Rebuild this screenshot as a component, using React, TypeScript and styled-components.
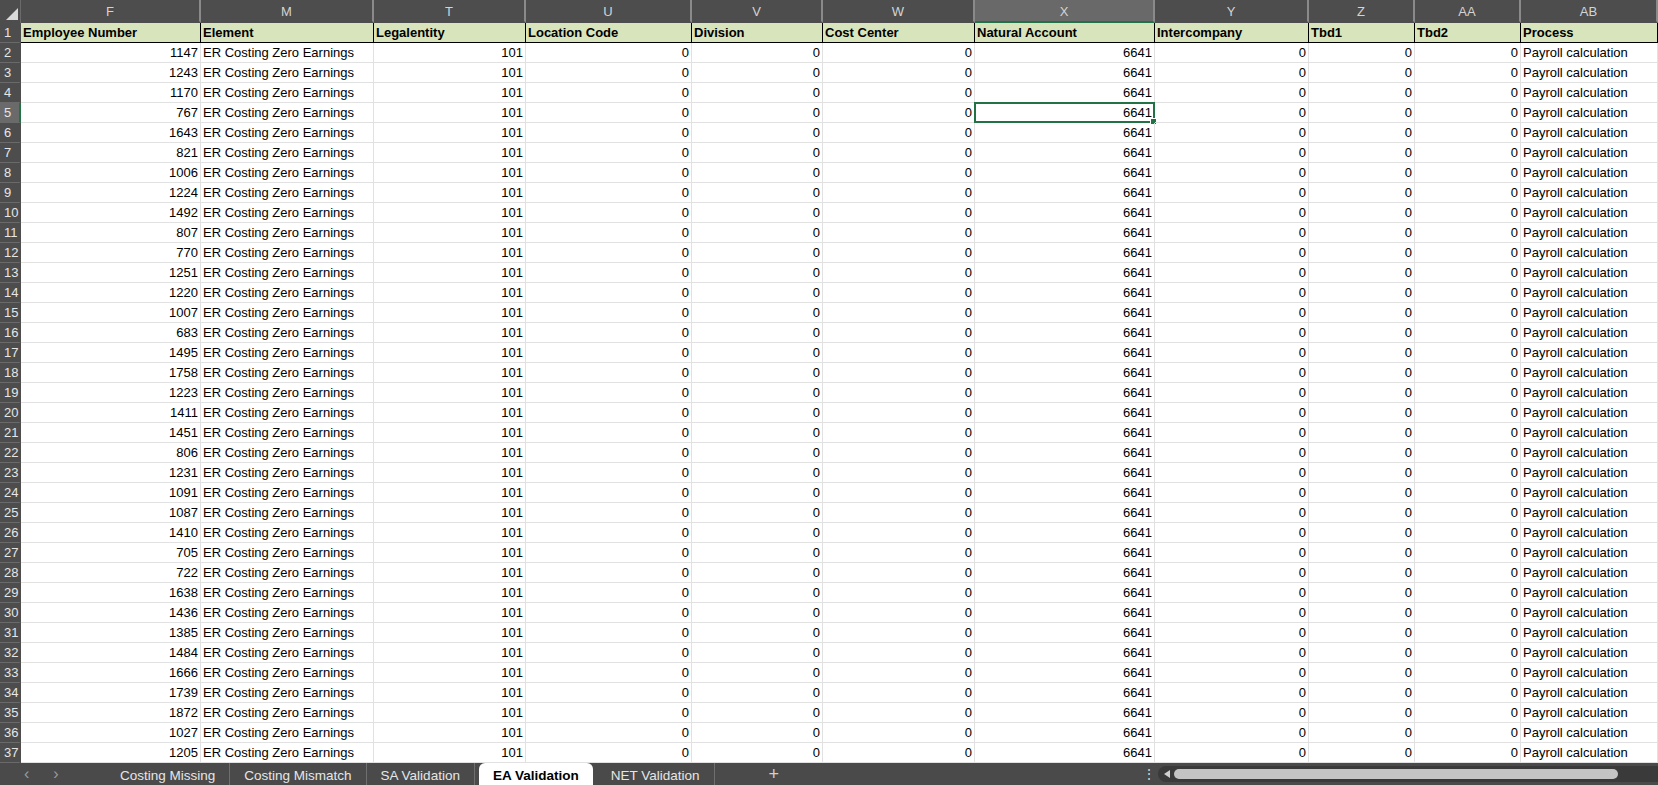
import styled, { createGlobalStyle } from "styled-components";

const GlobalStyle = createGlobalStyle`
  html, body { margin: 0; padding: 0; background: #ffffff; overflow: hidden; }
  body { font-family: "Liberation Sans", Arial, sans-serif; }
`;

const columns = [
  { letter: "F", title: "Employee Number", width: 180 },
  { letter: "M", title: "Element", width: 173 },
  { letter: "T", title: "Legalentity", width: 152 },
  { letter: "U", title: "Location Code", width: 166 },
  { letter: "V", title: "Division", width: 131 },
  { letter: "W", title: "Cost Center", width: 152 },
  { letter: "X", title: "Natural Account", width: 180 },
  { letter: "Y", title: "Intercompany", width: 154 },
  { letter: "Z", title: "Tbd1", width: 106 },
  { letter: "AA", title: "Tbd2", width: 106 },
  { letter: "AB", title: "Process", width: 137 },
];

const employees = [
  1147, 1243, 1170, 767, 1643, 821, 1006, 1224, 1492, 807, 770, 1251, 1220, 1007, 683, 1495, 1758, 1223,
  1411, 1451, 806, 1231, 1091, 1087, 1410, 705, 722, 1638, 1436, 1385, 1484, 1666, 1739, 1872, 1027, 1205,
];

const template = `21px ${columns.map((c) => c.width + "px").join(" ")}`;

const App = () => {
  return (
    <>
      <GlobalStyle />
      <Sheet>
        <Grid style={{ gridTemplateColumns: template }}>
          <Corner>
            <svg width="12" height="12" viewBox="0 0 12 12">
              <polygon points="12,0 12,12 0,12" fill="#d9d9d9" />
            </svg>
          </Corner>
          {columns.map((c) => (
            <ColHead key={c.letter} $active={c.letter === "X"}>
              {c.letter}
            </ColHead>
          ))}
          <RowNum>1</RowNum>
          {columns.map((c) => (
            <TitleCell key={c.title}>{c.title}</TitleCell>
          ))}
          {employees.map((emp, i) => {
            const row = i + 2;
            const values: (string | number)[] = [emp, "ER Costing Zero Earnings", 101, 0, 0, 0, 6641, 0, 0, 0, "Payroll calculation"];
            return [
              <RowNum key={"n" + row} $active={row === 5}>
                {row}
              </RowNum>,
              ...values.map((v, j) => (
                <Cell key={row + "-" + j} $num={typeof v === "number"}>
                  {v}
                  {row === 5 && j === 6 && <Selection />}
                </Cell>
              )),
            ];
          })}
        </Grid>
        <TabBar>
          <NavArrows>
            <span>‹</span>
            <span>›</span>
          </NavArrows>
          <Tabs>
            <Tab>Costing Missing</Tab>
            <Tab>Costing Mismatch</Tab>
            <Tab>SA Validation</Tab>
            <Tab $active>EA Validation</Tab>
            <Tab>NET Validation</Tab>
            <AddTab>+</AddTab>
          </Tabs>
          <Dots>⋮</Dots>
          <Scroll>
            <ScrollArrow>
              <svg width="6" height="8" viewBox="0 0 6 8">
                <polygon points="6,0 6,8 0,4" fill="#d0d0d0" />
              </svg>
            </ScrollArrow>
            <Thumb />
          </Scroll>
        </TabBar>
      </Sheet>
    </>
  );
};
export default App;

const Sheet = styled.div`
  width: 1658px;
  height: 785px;
  display: flex;
  flex-direction: column;
  overflow: hidden;
  font-size: 13px;
  color: #000;
`;

const Grid = styled.div`
  display: grid;
  grid-template-rows: 23px repeat(37, 20px);
  flex: 1;
  overflow: hidden;
`;

const Corner = styled.div`
  background: #4d4d4d;
  display: flex;
  align-items: flex-end;
  justify-content: flex-end;
  padding: 0 2px 3px 0;
  border-right: 1px solid #6a6a6a;
`;

const ColHead = styled.div<{ $active?: boolean }>`
  background: ${(p) => (p.$active ? "#696969" : "#4d4d4d")};
  color: #d4d4d4;
  display: flex;
  align-items: center;
  justify-content: center;
  border-right: 2px solid #8a8a8a;
  border-bottom: 2px solid ${(p) => (p.$active ? "#217346" : "#4d4d4d")};
  box-sizing: border-box;
  padding-top: 2px;
`;

const RowNum = styled.div<{ $active?: boolean }>`
  background: ${(p) => (p.$active ? "#6a6a6a" : "#4d4d4d")};
  color: #e6e6e6;
  display: flex;
  align-items: center;
  justify-content: flex-start;
  padding-left: 4px;
  box-sizing: border-box;
  border-bottom: 1px solid #6a6a6a;
  border-right: 2px solid ${(p) => (p.$active ? "#217346" : "#4d4d4d")};
  font-size: 13px;
`;

const TitleCell = styled.div`
  background: #d8e4bc;
  font-weight: bold;
  display: flex;
  align-items: center;
  padding-left: 2px;
  border-right: 1px solid #000;
  border-bottom: 1px solid #000;
  box-sizing: border-box;
  white-space: nowrap;
  overflow: hidden;
`;

const Cell = styled.div<{ $num?: boolean }>`
  position: relative;
  display: flex;
  align-items: center;
  justify-content: ${(p) => (p.$num ? "flex-end" : "flex-start")};
  padding: 0 2px;
  border-right: 1px solid #e1e1e1;
  border-bottom: 1px solid #e1e1e1;
  box-sizing: border-box;
  white-space: nowrap;
  overflow: visible;
`;

const Selection = styled.div`
  position: absolute;
  inset: -1px -1px -1px -1px;
  border: 2px solid #217346;
  pointer-events: none;
  &::after {
    content: "";
    position: absolute;
    right: -4px;
    bottom: -4px;
    width: 5px;
    height: 5px;
    background: #217346;
    border: 1px solid #fff;
  }
`;

const TabBar = styled.div`
  height: 22px;
  background: #4a4a4a;
  display: flex;
  align-items: stretch;
  color: #e0e0e0;
  font-size: 13.5px;
`;

const NavArrows = styled.div`
  width: 106px;
  display: flex;
  gap: 24px;
  padding-left: 24px;
  align-items: center;
  color: #9a9a9a;
  font-size: 16px;
  box-sizing: border-box;
`;

const Tabs = styled.div`
  display: flex;
  align-items: stretch;
  width: 1034px;
`;

const Tab = styled.div<{ $active?: boolean }>`
  padding: 0 14px;
  display: flex;
  align-items: center;
  white-space: nowrap;
  border-right: ${(p) => (p.$active ? "none" : "1px solid #6f6f6f")};
  background: ${(p) => (p.$active ? "#ffffff" : "transparent")};
  color: ${(p) => (p.$active ? "#000" : "#e6e6e6")};
  font-weight: ${(p) => (p.$active ? "bold" : "normal")};
  border-radius: ${(p) => (p.$active ? "6px 6px 0 0" : "0")};
  margin: ${(p) => (p.$active ? "0 4px 0 4px" : "0")};
  padding-top: 2px;
`;

const AddTab = styled.div`
  display: flex;
  align-items: center;
  padding-left: 54px;
  font-size: 18px;
  color: #d0d0d0;
`;

const Dots = styled.div`
  width: 18px;
  display: flex;
  align-items: center;
  justify-content: center;
  color: #d0d0d0;
  font-size: 14px;
`;

const Scroll = styled.div`
  flex: 1;
  margin: 3px 0 3px 0;
  background: #3a3a3a;
  border-radius: 8px 0 0 8px;
  display: flex;
  align-items: center;
  padding-left: 6px;
  gap: 4px;
`;

const ScrollArrow = styled.div`
  display: flex;
  align-items: center;
`;

const Thumb = styled.div`
  width: 444px;
  height: 10px;
  background: #c4c4c4;
  border-radius: 5px;
`;
